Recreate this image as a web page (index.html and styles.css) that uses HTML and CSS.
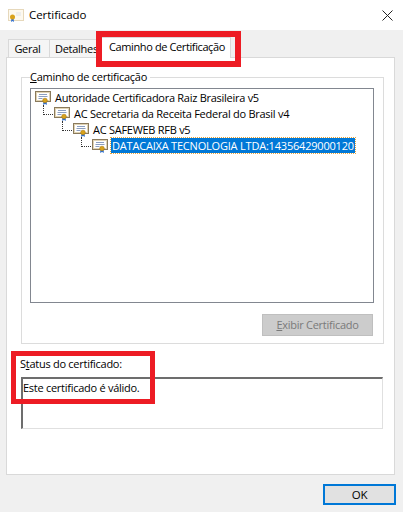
FILE: index.html
```html
<!DOCTYPE html>
<html lang="pt-BR">
<head>
<meta charset="utf-8">
<title>Certificado</title>
<link rel="stylesheet" href="styles.css">
</head>
<body>
<svg class="defs" width="0" height="0" aria-hidden="true">
  <symbol id="cert" viewBox="0 0 16 16">
    <rect x="0.5" y="2.500" width="15" height="10" fill="#f4ecd8" stroke="#8a7a5c"/>
    <rect x="1.500" y="3.500" width="13" height="8" fill="#fff" stroke="#e0d3b4"/>
    <path d="M4 5.500h8M3.500 7.500h9M3.500 9.500h4" stroke="#8c9fc0" fill="none"/>
    <path d="M8.500 12.500l-.5 3.500 1.500-1 .5.500v-3zM11.500 12.500l.5 3.500-1.500-1-.5.500v-3z" fill="#2f6fd0"/>
    <circle cx="10" cy="11.500" r="2.300" fill="#d9a21b" stroke="#a87a10" stroke-width=".6"/>
  </symbol>
</svg>
<main class="dialog">
  <header class="titlebar">
    <svg class="title-icon" viewBox="0 0 16 16"><rect x="0.5" y="2.5" width="15" height="11" fill="#fdf9ef" stroke="#e6d8bb"/><path d="M8 6h5M8 8h5" stroke="#dfe3ea"/><path d="M3.5 11l-.5 4 1.500-1 1.500 1-.5-4z" fill="#2f6fd0"/><circle cx="4.500" cy="10" r="2.500" fill="#d9a21b"/></svg>
    <span class="title-text">Certificado</span>
    <svg class="close" viewBox="0 0 11 11"><path d="M.5.500l10 10M10.500.500l-10 10" stroke="#222" fill="none"/></svg>
  </header>
  <div class="content">
    <nav class="tabs">
      <span class="tab tab-geral">Geral</span>
      <span class="tab tab-detalhes">Detalhes</span>
      <span class="tab tab-active">Caminho de Certificação</span>
    </nav>
    <section class="panel">
      <fieldset class="group">
        <legend class="legend"><u>C</u>aminho de certificação</legend>
        <ul class="tree">
          <li class="node level-0"><svg class="cert"><use href="#cert"/></svg><span class="label">Autoridade Certificadora Raiz Brasileira v5</span></li>
          <li class="node level-1"><svg class="cert"><use href="#cert"/></svg><span class="label">AC Secretaria da Receita Federal do Brasil v4</span></li>
          <li class="node level-2"><svg class="cert"><use href="#cert"/></svg><span class="label">AC SAFEWEB RFB v5</span></li>
          <li class="node level-3"><svg class="cert"><use href="#cert"/></svg><span class="label selected">DATACAIXA TECNOLOGIA LTDA:14356429000120</span></li>
        </ul>
        <div class="group-actions"><span class="btn-disabled"><u>E</u>xibir Certificado</span></div>
      </fieldset>
      <p class="status-label">S<u>t</u>atus do certificado:</p>
      <div class="status-box">Este certificado é válido.</div>
    </section>
    <footer class="footer"><span class="ok">OK</span></footer>
    <div class="mark mark-tab"></div>
    <div class="mark mark-status"></div>
  </div>
</main>
</body>
</html>
```
FILE: styles.css
```css
* { box-sizing: border-box; }
html, body { margin: 0; padding: 0; }
body {
  width: 403px;
  height: 512px;
  overflow: hidden;
  font-family: "Open Sans", "Noto Sans", sans-serif;
  font-size: 11px;
  letter-spacing: -0.27px;
  color: #000;
  background: #f0f0f0;
}
.defs { position: absolute; }
.dialog { display: flex; flex-direction: column; height: 512px; }
.titlebar {
  height: 30px;
  flex: none;
  background: #fff;
  display: flex;
  align-items: center;
  padding: 0 10px 0 8px;
}
.title-icon { width: 16px; height: 16px; margin-right: 5px; }
.title-text { font-size: 11.5px; letter-spacing: -0.05px; line-height: 14px; flex: 1; }
.close { width: 11px; height: 11px; }
.content { position: relative; flex: 1; padding: 0 6px; display: flex; flex-direction: column; }
.tabs { display: flex; height: 27px; align-items: flex-end; padding-left: 2px; }
.tab {
  height: 18px;
  line-height: 17px;
  background: #f5f5f5;
  border: 1px solid #d9d9d9;
  border-bottom: 0;
  text-align: center;
  white-space: nowrap;
}
.tab-geral { width: 42px; padding-right: 3px; }
.tab-detalhes { width: 51px; margin-left: -1px; padding-left: 4px; }
.tab-active {
  width: 132px;
  height: 21px;
  margin-left: -1px;
  margin-bottom: -1px;
  padding-left: 4px;
  letter-spacing: -0.39px;
  background: #fff;
  line-height: 17px;
  position: relative;
  z-index: 1;
}
.panel {
  height: 418px;
  width: 389px;
  background: #fff;
  border: 1px solid #d9d9d9;
  padding: 12px 10px 0 14px;
}
.group {
  margin: 0;
  padding: 0 9px 0 8px;
  height: 274px;
  border: 1px solid #dcdcdc;
  min-width: 0;
}
.legend { padding: 0 3px 0 0; margin-left: 0; line-height: 14px; }
.tree {
  list-style: none;
  margin: 4px 0 0;
  padding: 0 0 0 4px;
  height: 215px;
  background: #fff;
  border: 1px solid #828790;
}
.node { position: relative; height: 16px; display: flex; align-items: center; }
.level-1 { padding-left: 19px; }
.level-2 { padding-left: 38px; }
.level-3 { padding-left: 57px; }
.level-1::before, .level-2::before, .level-3::before {
  content: "";
  position: absolute;
  top: 0;
  width: 11px;
  height: 9px;
  border-left: 1px dotted #333;
  border-bottom: 1px dotted #333;
}
.level-1::before { left: 8px; }
.level-2::before { left: 27px; }
.level-3::before { left: 46px; }
.cert { width: 16px; height: 16px; flex: none; position: relative; }
.label { margin-left: 3px; line-height: 15px; white-space: nowrap; padding: 0 1px; }
.selected {
  margin-left: 3px;
  letter-spacing: -0.2px;
  background: #0078d7;
  color: #fff;
  outline: 1px dotted #e8a33a;
  padding: 0 1px 0 1px;
  height: 15px;
}
.group-actions { display: flex; justify-content: flex-end; margin-top: 11px; margin-right: 1px; }
.btn-disabled {
  width: 111px;
  height: 22px;
  line-height: 20px;
  text-align: center;
  background: #cccccc;
  border: 1px solid #bfbfbf;
  color: #7a7a7a;
}
.status-label { margin: 11px 0 0 -1px; height: 22px; line-height: 18px; }
.status-box {
  width: 362px;
  height: 52px;
  margin-top: 0;
  padding: 1px 0 0 0;
  line-height: 16px;
  border: 1px solid #e0e0e0;
  border-top: 2px solid #6d6d6d;
  border-left: 2px solid #6d6d6d;
}
.footer { display: flex; justify-content: flex-end; padding: 9px 1px 0 0; }
.ok {
  width: 73px;
  height: 21px;
  line-height: 17px;
  text-align: center;
  font-size: 11.5px;
  background: #e1e1e1;
  border: 2px solid #0078d7;
}
.mark { position: absolute; border: 6px solid #ed1c24; pointer-events: none; z-index: 2; }
.mark-tab { left: 96px; top: 1px; width: 145px; height: 36px; }
.mark-status { left: 11px; top: 321px; width: 144px; height: 53px; border-width: 5px; }
```
